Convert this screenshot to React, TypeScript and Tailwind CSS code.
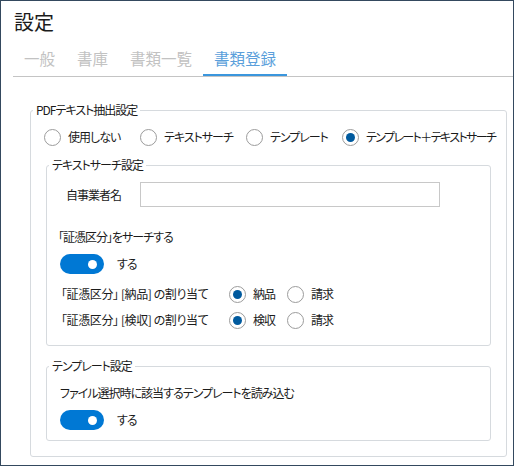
import { FC, ReactNode } from "react";

const Radio: FC<{ checked?: boolean; label: string; className?: string; labelClass?: string }> = ({
  checked,
  label,
  className,
  labelClass,
}) => (
  <label className={`flex items-center gap-[7px] h-[20px] shrink-0 ${className ?? ""}`}>
    <span className="w-[17px] h-[17px] rounded-full border border-[#9c9c9c] bg-white flex items-center justify-center shrink-0">
      {checked && <span className="w-[9px] h-[9px] rounded-full bg-[#005a9e]" />}
    </span>
    <span className={`leading-[16px] whitespace-nowrap ${labelClass ?? ""}`}>{label}</span>
  </label>
);

const Toggle: FC<{ label: string }> = ({ label }) => (
  <div className="flex items-center gap-[13px] h-[20px]">
    <span className="w-[44px] h-[20px] rounded-full bg-[#0078d4] flex items-center justify-end pr-[7px]">
      <span className="w-[9px] h-[9px] rounded-full bg-white" />
    </span>
    <span className="leading-[16px]">{label}</span>
  </div>
);

const Group: FC<{ title: string; className?: string; children: ReactNode }> = ({ title, className, children }) => (
  <fieldset className={`min-w-0 border border-[#d6dade] rounded-[3px] ${className ?? ""}`}>
    <legend className="ml-[2px] px-[3px] leading-[16px]">{title}</legend>
    {children}
  </fieldset>
);

export default function App() {
  const tabs = ["一般", "書庫", "書類一覧", "書類登録"];
  return (
    <div
      className="w-[514px] h-[466px] border border-[#34495e] bg-white text-[12px] text-[#1b1b1b] [font-feature-settings:'palt'] overflow-hidden"
      style={{ fontFamily: '"Noto Sans CJK JP", "Noto Sans", sans-serif' }}
    >
      <h1 className="pl-[13px] pt-[6px] text-[20px] leading-[30px]">設定</h1>

      <div className="ml-[12px] flex border-b border-[#c4c4c4]">
        {tabs.map((t, i) => (
          <div
            key={t}
            className={`px-[11px] pt-[11px] pb-[6px] text-[15.5px] leading-[20px] border-b-2 ${
              i === 3 ? "border-[#3a96dd] text-[#5b9fdb]" : "border-transparent text-[#c2c2c2]"
            }`}
          >
            {t}
          </div>
        ))}
      </div>

      <Group title="PDFテキスト抽出設定" className="ml-[29px] mt-[25px] w-[477px] tracking-[-1px]">
        <div className="px-[15px] pb-[15px]">
          <div className="flex pt-[9px]">
            <Radio label="使用しない" className="w-[96px] -ml-[2px]" />
            <Radio label="テキストサーチ" className="w-[106px]" />
            <Radio label="テンプレート" className="w-[96px]" />
            <Radio label="テンプレート＋テキストサーチ" checked labelClass="tracking-[-1.6px]" />
          </div>

          <Group title="テキストサーチ設定" className="mt-[10px] pb-[15px]">
            <div className="flex items-center pt-[9px] pl-[19px]">
              <span className="w-[74px]">自事業者名</span>
              <input className="w-[300px] h-[25px] border border-[#c8c8c8] outline-none px-1" />
            </div>
            <div className="mt-[22px] pl-[11px] leading-[16px]">「証憑区分」をサーチする</div>
            <div className="mt-[9px] pl-[13px]">
              <Toggle label="する" />
            </div>
            <div className="mt-[10px] pl-[14px] flex items-center">
              <span className="w-[168px] whitespace-nowrap tracking-[-0.4px]">「証憑区分」 [納品] の割り当て</span>
              <Radio label="納品" checked className="w-[58px]" />
              <Radio label="請求" />
            </div>
            <div className="mt-[6px] pl-[14px] flex items-center">
              <span className="w-[168px] whitespace-nowrap tracking-[-0.4px]">「証憑区分」 [検収] の割り当て</span>
              <Radio label="検収" checked className="w-[58px]" />
              <Radio label="請求" />
            </div>
          </Group>

          <Group title="テンプレート設定" className="mt-[12px] pb-[10px]">
            <div className="pt-[11px] pl-[13px] leading-[16px]">ファイル選択時に該当するテンプレートを読み込む</div>
            <div className="mt-[9px] pl-[13px]">
              <Toggle label="する" />
            </div>
          </Group>
        </div>
      </Group>
    </div>
  );
}
